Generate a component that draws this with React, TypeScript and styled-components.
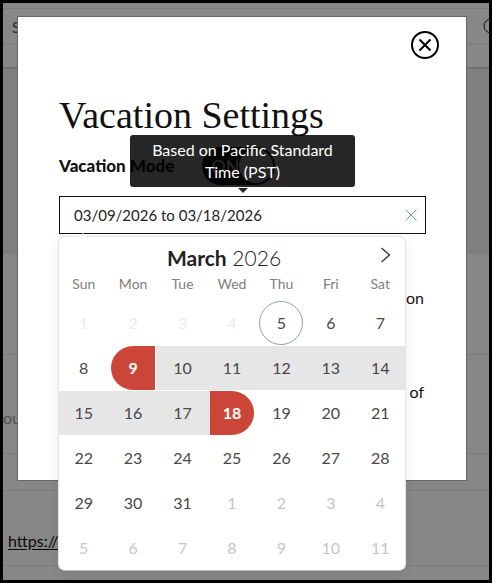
import React, { useState } from "react";
import styled, { createGlobalStyle, css } from "styled-components";

const GlobalStyle = createGlobalStyle`
  *, *::before, *::after { box-sizing: border-box; }
  body { margin: 0; background: #000; }
  body, button, input { font-family: Lato, "Liberation Sans", sans-serif; }
  button { padding: 0; border: 0; background: none; cursor: pointer; }
  h1, h2, p { margin: 0; }
`;

const Frame = styled.div`
  position: relative;
  display: flex;
  flex-direction: column;
  min-height: 100vh;
  overflow: hidden;
  border: 3px solid #000;
  background: #fff;
  font-size: 16px;
  line-height: 24px;
`;

const NavBar = styled.header`
  display: flex;
  align-items: center;
  justify-content: space-between;
  height: 37px;
  margin-top: 5px;
  padding-left: 9px;
  border: 1px solid #ebebeb;
  border-width: 1px 0;
  color: #555;
`;

const SearchButton = styled.button`
  display: flex;
  margin-right: -12px;
  color: #222;
`;

const SubBar = styled.div`
  height: 24px;
  border-bottom: 2px solid #d8d8d8;
`;

const Banner = styled.div`
  height: 185px;
  background: #f0f0f0;
`;

const PageRow = styled.div<{ $height: number }>`
  display: flex;
  align-items: center;
  flex: none;
  height: ${(p) => p.$height}px;
  border-bottom: 1px solid #ebebeb;
  color: #999;
`;

const RowText = styled.p`
  padding-top: 28px;
`;

const PageLink = styled.a`
  padding-left: 5px;
  padding-top: 26px;
  color: #111;
  text-decoration: underline;
  text-underline-offset: 2px;
`;

const Overlay = styled.div`
  position: absolute;
  inset: 0;
  padding: 13px 22px 0 14px;
  background: rgba(0, 0, 0, 0.47);
`;

const Modal = styled.section`
  display: flex;
  flex-direction: column;
  padding: 14px 40px 76px 41px;
  border: 1px solid #666;
  background: #fff;
  background-clip: padding-box;
  color: #111;
`;

const CloseButton = styled.button`
  display: flex;
  align-self: flex-end;
  margin-right: -13px;
  color: #000;
`;

const Title = styled.h1`
  margin-top: 34px;
  font: 400 38px/44px "Liberation Serif", serif;
  white-space: nowrap;
`;

const ModeRow = styled.div`
  position: relative;
  display: flex;
  align-items: center;
  gap: 28px;
  height: 38px;
  margin-top: 10px;
  font-size: 17px;
  font-weight: 900;
`;

const Toggle = styled.span`
  position: relative;
  display: flex;
  align-items: center;
  width: 73px;
  height: 38px;
  padding-left: 9px;
  border-radius: 19px;
  background: #111;
  color: #fff;
  font-size: 18px;
  font-weight: 400;

  input {
    position: absolute;
    inset: 0;
    width: 100%;
    height: 100%;
    margin: 0;
    opacity: 0;
  }

  &::after {
    content: "";
    width: 34px;
    height: 34px;
    margin: 0 2px 0 auto;
    border-radius: 50%;
    background: #fff;
  }
`;

const Tooltip = styled.div`
  position: absolute;
  left: 71px;
  bottom: -2px;
  width: 225px;
  padding: 4px 20px;
  border-radius: 3px;
  background: rgba(0, 0, 0, 0.85);
  color: #fff;
  font-size: 16px;
  font-weight: 400;
  line-height: 22px;
  text-align: center;

  &::after {
    content: "";
    position: absolute;
    top: 100%;
    left: 50%;
    margin: 1px 0 0 -5px;
    border: 5px solid transparent;
    border-top-color: #262626;
    border-bottom: 0;
  }
`;

const DateField = styled.div`
  position: relative;
  display: flex;
  align-items: center;
  height: 38px;
  margin-top: 11px;
  border: 1px solid #111;
`;

const DateInput = styled.input`
  flex: 1;
  min-width: 0;
  height: 36px;
  padding: 0 14px;
  border: 0;
  outline: 0;
  background: none;
  color: #222;
  font-size: 15px;
`;

const ClearButton = styled.button`
  display: flex;
  margin-right: 8px;
  color: #5b9ccc;
`;

const Note = styled.p`
  padding-right: 2px;
  text-align: right;
`;

const Notes = styled.div`
  display: grid;
  gap: 70px;
  margin-top: 52px;
`;

const Calendar = styled.div`
  position: absolute;
  top: 39px;
  left: -2px;
  width: 348px;
  border: 1px solid #e6e6e6;
  border-bottom-color: #bbb;
  border-radius: 7px;
  background: #fff;
  box-shadow: 0 3px 13px rgba(0, 0, 0, 0.08);

  &::before {
    content: "";
    position: absolute;
    bottom: 100%;
    left: 20px;
    border: 4px solid transparent;
    border-top: 0;
    border-bottom-color: #fff;
  }
`;

const MonthBar = styled.div`
  position: relative;
  display: flex;
  align-items: center;
  justify-content: center;
  height: 36px;
  padding: 6px 16px 0 0;
`;

const MonthName = styled.h2`
  color: #222;
  font-size: 21px;
  font-weight: 300;
  line-height: 30px;

  strong { font-weight: 700; }
`;

const NextButton = styled.button`
  position: absolute;
  top: 10px;
  right: 14px;
  display: flex;
  color: #333;
`;

const WeekGrid = styled.div`
  display: grid;
  grid-template-columns: repeat(7, 1fr);
  justify-items: center;
`;

const Weekdays = styled(WeekGrid)`
  height: 28px;
  color: #808080;
  font-size: 14px;
  line-height: 22px;
`;

const Days = styled(WeekGrid)`
  row-gap: 1px;
  overflow: hidden;
  border-radius: 0 0 6px 6px;
`;

type DayKind = "plain" | "past" | "next" | "today" | "range" | "start" | "end";

const dayStyles: Record<DayKind, ReturnType<typeof css> | null> = {
  plain: null,
  past: css`color: #ececec;`,
  next: css`color: #c6c6c6;`,
  today: css`
    border: 1px solid #959ea9;
    border-radius: 50%;
  `,
  range: css`
    background: #e6e6e6;
    box-shadow: -5px 0 0 #e6e6e6, 5px 0 0 #e6e6e6;
  `,
  start: css`
    border-radius: 22px 0 0 22px;
    background: #cb4639;
    color: #fff;
    font-weight: 700;
  `,
  end: css`
    border-radius: 0 22px 22px 0;
    background: #cb4639;
    color: #fff;
    font-weight: 700;
  `,
};

const Day = styled.button<{ $kind: DayKind }>`
  width: 44px;
  height: 44px;
  padding-bottom: 2px;
  color: #484848;
  font-size: 16px;
  ${(p) => dayStyles[p.$kind]}
`;

const kindOf = (i: number): DayKind => {
  const n = i + 1;
  if (n < 5) return "past";
  if (n > 31) return "next";
  if (n === 5) return "today";
  if (n === 9) return "start";
  if (n === 18) return "end";
  if (n > 9 && n < 18) return "range";
  return "plain";
};

const weekdays = ["Sun", "Mon", "Tue", "Wed", "Thu", "Fri", "Sat"];
const days = Array.from({ length: 42 }, (_, i) => ({
  label: i < 31 ? i + 1 : i - 30,
  kind: kindOf(i),
}));

export default function App() {
  const [on, setOn] = useState(true);
  const [range, setRange] = useState("03/09/2026 to 03/18/2026");

  return (
    <>
      <GlobalStyle />
      <Frame>
        <NavBar>
          S
          <SearchButton aria-label="Search">
            <svg width="18" height="18" viewBox="0 0 18 18" fill="none" stroke="currentColor">
              <circle cx="8" cy="8" r="7" />
              <path d="M13 13l4 4" />
            </svg>
          </SearchButton>
        </NavBar>
        <SubBar />
        <Banner />
        <PageRow $height={101} />
        <PageRow $height={99}>
          <RowText>ou</RowText>
        </PageRow>
        <PageRow $height={37} />
        <PageRow $height={75}>
          <PageLink href="#site">https://</PageLink>
        </PageRow>
        <Overlay>
          <Modal role="dialog" aria-labelledby="settings-title">
            <CloseButton aria-label="Close">
              <svg width="28" height="28" viewBox="0 0 28 28" fill="none" stroke="currentColor" strokeWidth="2">
                <circle cx="14" cy="14" r="13" />
                <path d="M8.5 8.5l11 11M19.5 8.5l-11 11" />
              </svg>
            </CloseButton>
            <Title id="settings-title">Vacation Settings</Title>
            <ModeRow>
              <label htmlFor="mode">Vacation Mode</label>
              <Toggle>
                ON
                <input id="mode" type="checkbox" checked={on} onChange={(e) => setOn(e.target.checked)} />
              </Toggle>
              <Tooltip role="tooltip">Based on Pacific Standard Time (PST)</Tooltip>
            </ModeRow>
            <DateField>
              <DateInput aria-label="Vacation dates" value={range} onChange={(e) => setRange(e.target.value)} />
              <ClearButton aria-label="Clear dates" onClick={() => setRange("")}>
                <svg width="12" height="12" viewBox="0 0 12 12" fill="none" stroke="currentColor">
                  <path d="M.5.5l11 11M11.5.5l-11 11" />
                </svg>
              </ClearButton>
              <Calendar>
                <MonthBar>
                  <MonthName>
                    <strong>March</strong> 2026
                  </MonthName>
                  <NextButton aria-label="Next month">
                    <svg width="11" height="16" viewBox="0 0 11 16" fill="none" stroke="currentColor" strokeWidth="1.3">
                      <path d="M1.5 1l8 7-8 7" />
                    </svg>
                  </NextButton>
                </MonthBar>
                <Weekdays>
                  {weekdays.map((d) => (
                    <span key={d}>{d}</span>
                  ))}
                </Weekdays>
                <Days>
                  {days.map((d, i) => (
                    <Day key={i} $kind={d.kind} disabled={d.kind === "past"}>
                      {d.label}
                    </Day>
                  ))}
                </Days>
              </Calendar>
            </DateField>
            <Notes>
              <Note>on</Note>
              <Note>of</Note>
            </Notes>
          </Modal>
        </Overlay>
      </Frame>
    </>
  );
}
